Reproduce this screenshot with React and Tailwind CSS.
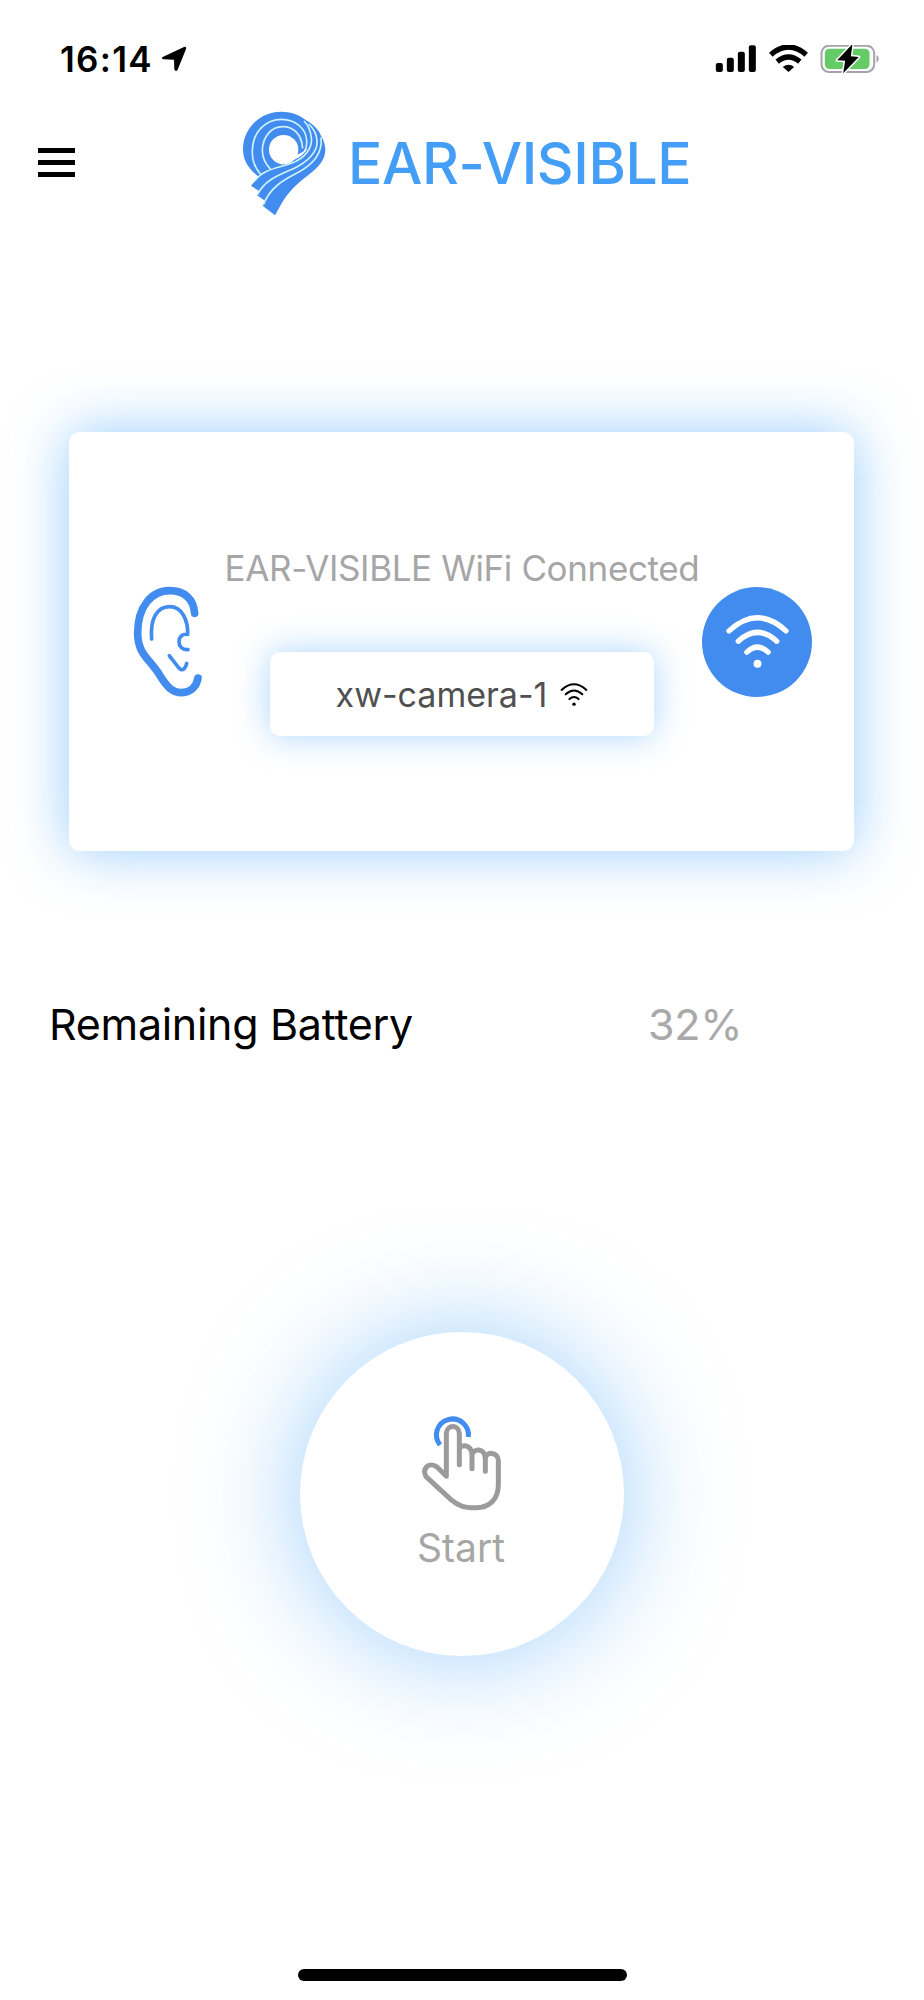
function StatusBar() {
  return (
    <header className="flex h-[118px] items-center justify-between pr-[42px] pl-[60px]">
      <div className="flex items-center gap-[8px]">
        <span className="text-[35px] font-semibold tracking-[1.3px]">16:14</span>
        <svg className="h-[26px] w-[26px]" viewBox="0 0 78 78">
          <path d="M5 33 L69 3 Q77 1 75 9 L50 71 Q44 79 40 70 L39 41 L8 40 Q0 38 5 33Z" fill="#000" />
        </svg>
      </div>
      <svg className="mt-[2px] h-[30px] w-[167px]" viewBox="0 0 498 90">
        <g fill="#000">
          <rect x="1" y="54" width="21" height="27" rx="6" />
          <rect x="34" y="38" width="21" height="43" rx="6" />
          <rect x="67" y="20" width="21" height="61" rx="6" />
          <rect x="100" y="1" width="21" height="80" rx="6" />
        </g>
        <g fill="none" stroke="#000" strokeWidth="16">
          <path d="M166 29 Q219 -17 272 29" />
          <path d="M185 50 Q219 22 253 50" />
        </g>
        <path d="M219 81 L202 66 Q219 52 236 66Z" />
        <rect x="318" y="2" width="158" height="79" rx="23" fill="none" stroke="#a3a3a8" strokeWidth="6" />
        <path d="M483 29 Q497 40 483 53Z" fill="#a3a3a8" />
        <rect x="328" y="11" width="134" height="61" rx="14" fill="#65cb67" />
        <path d="M411 -3 L365 46 L389 47 L383 85 L430 36 L406 34Z" fill="#000" stroke="#fff" strokeWidth="9" paintOrder="stroke" strokeLinejoin="round" />
      </svg>
    </header>
  );
}

function Logo() {
  return (
    <svg className="mt-[4px] h-[130px] w-[130px]" viewBox="0 0 390 390">
      <path
        fill="#428cf0"
        d="M116 231 C84 205 69 180 69 148 C69 84 121 35 183 35 C218 35 242 47 262 63 C282 75 298 92 303 107 C316 127 320 153 311 174 C297 208 255 230 229 255 C194 288 183 314 165 346 L128 317 L136 303 L110 285 L118 274 L93 257 Z"
      />
      <g fill="none" stroke="#cdf2fb" strokeWidth="5">
        <path d="M121 222 C100 196 96 176 97 150 C99 96 136 58 185 58 C228 58 259 88 260 122 C261 134 258 146 254 154" />
        <path d="M152 208 C133 189 127 173 127 151 C128 110 154 80 188 80 C220 80 245 102 248 145" />
        <path d="M104 243 C128 207 176 204 214 190 C254 175 278 146 274 112 C271 90 262 73 252 63" />
        <path d="M112 285 C133 240 177 225 220 206 C262 187 294 156 291 122 C290 102 279 84 266 72" />
        <path d="M130 315 C150 262 190 240 231 219 C277 195 309 162 303 112" />
      </g>
      <circle cx="191" cy="149" r="44" fill="#fff" />
      <path d="M178 194 Q214 192 232 164 Q248 158 263 144 Q250 169 222 179 Q203 188 178 194Z" fill="#fff" />
    </svg>
  );
}

function Header() {
  return (
    <div className="flex h-[90px] items-center pl-[38px]">
      <svg className="-mt-[2px] h-[29px] w-[37px]" viewBox="0 0 37 29">
        <path d="M0 2.5H37M0 14.5H37M0 26.5H37" stroke="#000" strokeWidth="4.8" />
      </svg>
      <div className="ml-[145px] flex items-center">
        <Logo />
        <h1 className="mt-[2px] -ml-[2px] text-[57px] font-medium tracking-[-0.4px] whitespace-nowrap text-[#459ef5]">EAR-VISIBLE</h1>
      </div>
    </div>
  );
}

function WifiIcon({ className }) {
  return (
    <svg className={className} viewBox="0 0 190 160" fill="none" stroke="currentColor" strokeLinecap="round">
      <path d="M9 48 Q95 -31 181 48" />
      <path d="M37 79 Q95 26 153 79" />
      <path d="M63 112 Q95 82 127 112" />
      <circle cx="95" cy="147" r="12" fill="currentColor" stroke="none" />
    </svg>
  );
}

function EarIcon() {
  return (
    <svg className="-mt-[2px] h-[112px] w-[70px]" viewBox="0 0 210 336" fill="none" stroke="#428cf0" strokeLinecap="round" strokeLinejoin="round">
      <path strokeWidth="23" d="M188 85 C185 42 157 17 114 17 C58 17 17 65 17 145 C17 208 54 222 84 272 C112 317 130 324 150 323 C177 322 194 303 198 279" />
      <path strokeWidth="11" d="M59 162 C54 105 73 65 113 65 C152 65 168 108 167 148 C132 143 132 197 168 194" />
      <path strokeWidth="11" d="M112 212 C120 221 131 239 144 252 C153 258 162 248 164 235" />
    </svg>
  );
}

function ConnectionCard() {
  return (
    <section className="mr-[70px] ml-[69px] mt-[224px] flex h-[419px] items-center rounded-[11px] bg-white pr-[42px] pl-[63px] shadow-[0_0_56px_rgba(80,170,250,0.6)]">
      <EarIcon />
      <div className="ml-[23px] flex w-[474px] flex-col items-center">
        <p className="text-[35px] leading-[42px] tracking-[-0.36px] whitespace-nowrap text-[#a6a6a6]">EAR-VISIBLE WiFi Connected</p>
        <button className="mt-[63px] flex h-[84px] w-[384px] items-center justify-center gap-[13px] rounded-[10px] bg-white shadow-[0_0_34px_rgba(80,170,250,0.48)]">
          <span className="text-[34px] text-[#505050]">xw-camera-1</span>
          <WifiIcon className="h-[23px] w-[28px] stroke-[14] text-black" />
        </button>
      </div>
      <div className="ml-auto flex h-[110px] w-[110px] shrink-0 items-center justify-center rounded-full bg-[#428cf0]">
        <WifiIcon className="h-[53px] w-[63px] stroke-[16] text-white" />
      </div>
    </section>
  );
}

function HandIcon() {
  return (
    <svg className="h-[98px] w-[82px]" viewBox="0 0 246 294" fill="none" strokeWidth="15" strokeLinejoin="round">
      <path stroke="#428cf0" d="M57 93 A48 48 0 1 1 142 69" />
      <path stroke="#9b9b9b" strokeLinecap="round" d="M115 152 V58 C113 31 78 31 76 58 V187 L48 159 C26 142 2 162 15 188 L90 257 C112 276 130 281 162 281 C208 282 232 253 232 212 V139 C231 114 193 110 193 135 V172 M193 135 C192 99 156 103 153 123 V164 M153 123 C152 90 119 90 115 106" />
    </svg>
  );
}

export default function App() {
  return (
    <main className="flex h-[2000px] w-[924px] flex-col bg-white font-['Inter',sans-serif] text-black">
      <StatusBar />
      <Header />
      <ConnectionCard />
      <section className="mt-[146px] flex h-[54px] items-center pl-[49px] text-[43px]">
        <span className="w-[599px] tracking-[-0.3px] whitespace-nowrap">Remaining Battery</span>
        <span className="tracking-[-0.3px] text-[#a9a9a9]">32%</span>
      </section>
      <button className="mx-auto mt-[281px] flex h-[324px] w-[324px] flex-col items-center rounded-full bg-white pt-[82px] shadow-[0_0_108px_rgba(80,170,250,0.56)]">
        <HandIcon />
        <span className="mt-[12px] -ml-[2px] text-[39px] leading-[48px] text-[#a6a6a6]">Start</span>
      </button>
      <div className="mx-auto mt-[313px] h-[12px] w-[329px] rounded-full bg-black" />
    </main>
  );
}
